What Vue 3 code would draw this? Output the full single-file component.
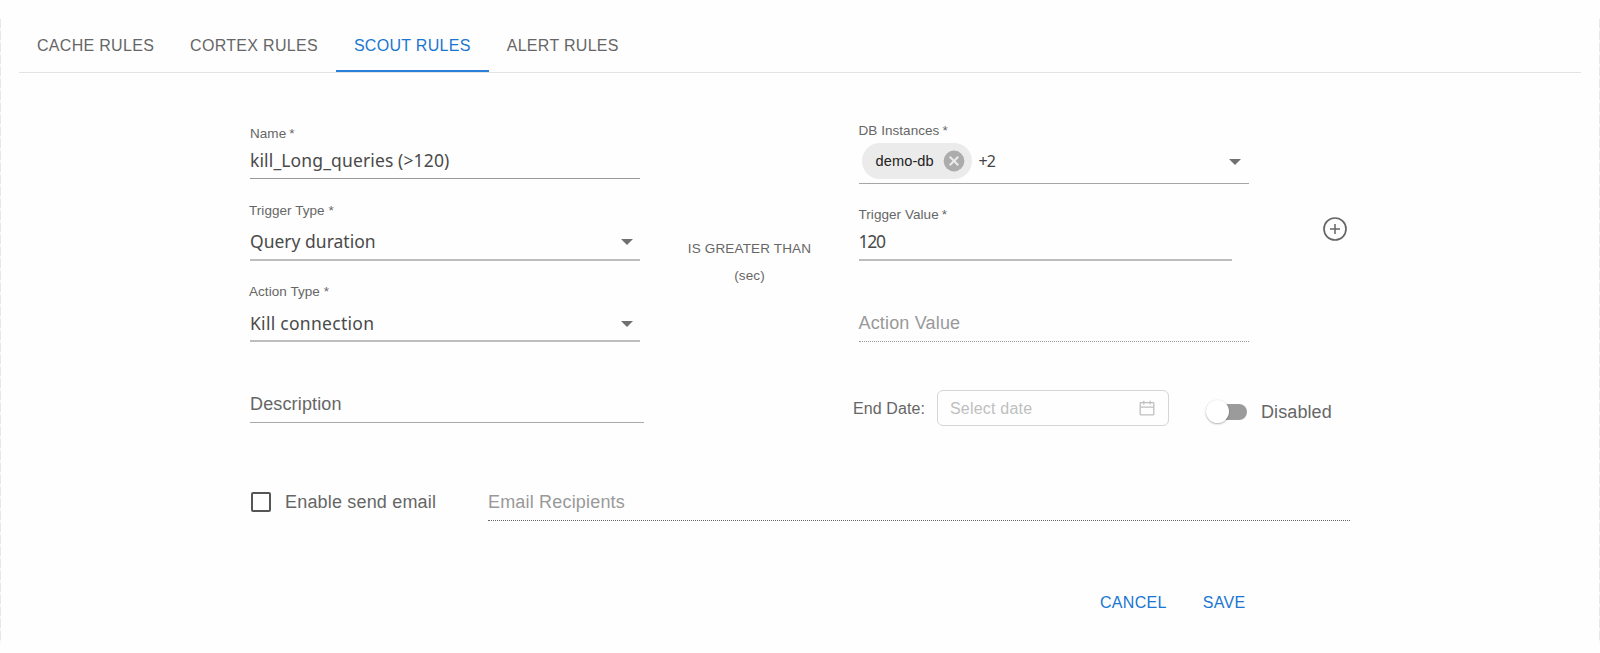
<script setup>
const tabs = ['CACHE RULES', 'CORTEX RULES', 'SCOUT RULES', 'ALERT RULES']
const activeTab = 'SCOUT RULES'
</script>

<template>
  <main class="page">
    <nav class="tabs">
      <button v-for="tab in tabs" :key="tab" class="tab" :class="{ active: tab === activeTab }">{{ tab }}</button>
    </nav>

    <section class="form">
      <div class="left">
        <div class="field name">
          <label>Name<span class="star">*</span></label>
          <div class="value">kill_Long_queries (&gt;120)</div>
        </div>
        <div class="field trigger">
          <label>Trigger Type *</label>
          <div class="value">Query duration<svg class="arrow" width="12" height="6" viewBox="0 0 12 6"><path d="M0 0h12L6 6z" /></svg></div>
        </div>
        <div class="field action">
          <label>Action Type *</label>
          <div class="value">Kill connection<svg class="arrow" width="12" height="6" viewBox="0 0 12 6"><path d="M0 0h12L6 6z" /></svg></div>
        </div>
        <div class="field description">Description</div>
      </div>

      <div class="middle">
        <div>IS GREATER THAN</div>
        <div>(sec)</div>
      </div>

      <div class="right">
        <div class="field instances">
          <label>DB Instances<span class="star">*</span></label>
          <div class="chips">
            <span class="chip">demo-db
              <svg width="22" height="22" viewBox="0 0 22 22">
                <circle cx="11" cy="11" r="10.4" fill="#acacac" />
                <path d="M6.7 6.7l8.6 8.6M15.3 6.7l-8.6 8.6" stroke="#ebebeb" stroke-width="2" />
              </svg>
            </span>
            <span class="more">+2</span>
            <svg class="arrow" width="12" height="6" viewBox="0 0 12 6"><path d="M0 0h12L6 6z" /></svg>
          </div>
        </div>
        <div class="field threshold">
          <label>Trigger Value<span class="star">*</span></label>
          <div class="value">120</div>
        </div>
        <div class="field action-value">Action Value</div>
        <div class="schedule">
          <span class="end-label">End Date:</span>
          <div class="date">
            <span>Select date</span>
            <svg width="16" height="16" viewBox="0 0 16 16" fill="none" stroke="#bfbfbf" stroke-width="1.3">
              <rect x="1.2" y="2.7" width="13.6" height="12.1" rx=".5" />
              <path d="M1.2 7.2h13.6M4.8 .8v3.6M11.2 .8v3.6" />
            </svg>
          </div>
          <span class="switch"><span class="thumb"></span></span>
          <span class="switch-label">Disabled</span>
        </div>
      </div>

      <svg class="add" width="24" height="24" viewBox="0 0 24 24" fill="none" stroke="#666" stroke-width="1.7">
        <circle cx="12" cy="12" r="11" />
        <path d="M12 7v10M7 12h10" stroke-width="1.5" />
      </svg>
    </section>

    <section class="email">
      <span class="checkbox"></span>
      <span class="email-label">Enable send email</span>
      <div class="recipients">Email Recipients</div>
    </section>

    <footer class="actions">
      <button>CANCEL</button>
      <button>SAVE</button>
    </footer>
  </main>
</template>

<style>
body { margin: 0; background: #fefefe; }
</style>

<style scoped>
.page {
  box-sizing: border-box;
  position: relative;
  height: 653px;
  overflow: hidden;
  padding: 0 19px;
  background: #fefefe;
  color: #666;
  font-family: "Liberation Sans", Arial, sans-serif;
}
/* faint broken edge lines on both sides of the panel */
.page::before,
.page::after {
  content: "";
  position: absolute;
  top: 19px;
  bottom: 10px;
  left: 0;
  width: 1px;
  background: repeating-linear-gradient(#e8e8e8 0 9px, #f8f8f8 9px 12px);
}
.page::after { left: auto; right: 0; }
button {
  border: 0;
  padding: 0;
  background: none;
  color: inherit;
  font: 16px/24px "Liberation Sans", Arial, sans-serif;
  letter-spacing: 0.3px;
}
.tabs {
  box-sizing: border-box;
  display: flex;
  height: 73px;
  border-bottom: 1px solid #e3e3e3;
}
.tab {
  box-sizing: border-box;
  height: 72px;
  padding: 21px 18px 0;
  border-bottom: 2px solid transparent;
}
.tab.active { color: #1976d2; border-color: #2a7fd8; }
.form { display: flex; height: 353px; padding-left: 231px; }
.left { width: 390px; padding-top: 51px; }
.middle {
  width: 219px;
  padding-top: 162px;
  text-align: center;
  font-size: 13.5px;
  line-height: 27px;
  letter-spacing: 0.15px;
}
.right { width: 390px; padding-top: 48px; margin-left: -0.5px; }
.add { display: block; margin: 143.5px 0 0 74.5px; }

.field { border-bottom: 1px solid #999; font-size: 18px; line-height: 24px; white-space: nowrap; }
label { display: block; font-size: 13.5px; line-height: 20px; letter-spacing: 0.05px; }
.star { margin-left: 3px; }
.value {
  display: flex;
  align-items: center;
  justify-content: space-between;
  height: 24px;
  color: #4a4a4a;
  font: 17.5px/24px "Noto Sans", sans-serif;
}
.arrow { fill: #707070; margin: 2px 7.5px 0 0; }
.name { padding-bottom: 6px; }
.name .value { margin-top: 4px; letter-spacing: 0.13px; }
.trigger { margin-top: 22px; padding-bottom: 6px; border-bottom: 2px solid #bdbdbd; }
.trigger label, .action label { margin-left: -1px; }
.trigger .value { margin-top: 8px; }
.action { margin-top: 21px; padding-bottom: 5px; border-bottom: 2px solid #bdbdbd; }
.action .value { margin-top: 9px; letter-spacing: 0.28px; }
.description { width: 394px; margin-top: 50px; padding-bottom: 6px; border-color: #aaa; letter-spacing: 0.15px; }

.instances { padding-bottom: 4px; border-color: #a6a6a6; }
.chips { display: flex; align-items: center; height: 36px; margin-top: 2px; }
.chip {
  display: flex;
  align-items: center;
  box-sizing: border-box;
  width: 110px;
  height: 36px;
  margin-left: 3px;
  padding-left: 14px;
  border-radius: 18px;
  background: #ebebeb;
  color: #222;
  font-size: 14.6px;
  letter-spacing: 0.1px;
}
.chip svg { flex: none; margin-left: 9px; }
.more { margin-left: 7px; color: #444; font: 16px/24px "Noto Sans", sans-serif; letter-spacing: -0.8px; }
.instances .arrow { margin-left: auto; }
.threshold { width: 373px; margin-top: 21px; padding-bottom: 6px; border-bottom: 2px solid #bdbdbd; }
.threshold .value { margin-top: 4px; letter-spacing: -1.2px; }
.action-value { margin-top: 50px; padding-bottom: 6px; border-bottom: 1px dotted #999; color: #999; letter-spacing: 0.17px; }

.schedule { display: flex; align-items: center; width: 480px; height: 36px; margin: 48px 0 0 -5.5px; white-space: nowrap; }
.end-label { width: 84px; padding-top: 2px; font-size: 16px; letter-spacing: 0.1px; }
.date {
  box-sizing: border-box;
  display: flex;
  align-items: center;
  justify-content: space-between;
  width: 232px;
  height: 36px;
  padding: 0 13px 0 12px;
  border: 1px solid #d5d5d5;
  border-radius: 6px;
  color: #bfbfbf;
  font-size: 16px;
  letter-spacing: 0.2px;
}
.date span { padding-top: 2px; }
.switch { position: relative; width: 39px; height: 16px; margin: 7px 0 0 39px; border-radius: 8px; background: #9b9b9b; }
.thumb {
  position: absolute;
  left: -2px;
  top: -4px;
  width: 23px;
  height: 23px;
  border-radius: 50%;
  background: #fff;
  box-shadow: 0 1px 2px rgba(0, 0, 0, 0.28), 0 0 2px rgba(0, 0, 0, 0.08);
}
.switch-label { margin: 8px 0 0 14px; font-size: 18px; letter-spacing: 0.1px; }

.email { display: flex; height: 31px; margin-top: 64px; padding-left: 232px; font-size: 18px; line-height: 24px; }
.checkbox { box-sizing: border-box; width: 20px; height: 20px; margin-top: 2px; border: 2px solid #555; border-radius: 2px; }
.email-label { width: 203px; margin-left: 14px; letter-spacing: 0.18px; }
.recipients { box-sizing: border-box; width: 862px; border-bottom: 1px dotted #666; color: #999; letter-spacing: 0.18px; }
.actions { display: flex; gap: 36px; margin-top: 70px; padding-left: 1081px; color: #1976d2; }
</style>
